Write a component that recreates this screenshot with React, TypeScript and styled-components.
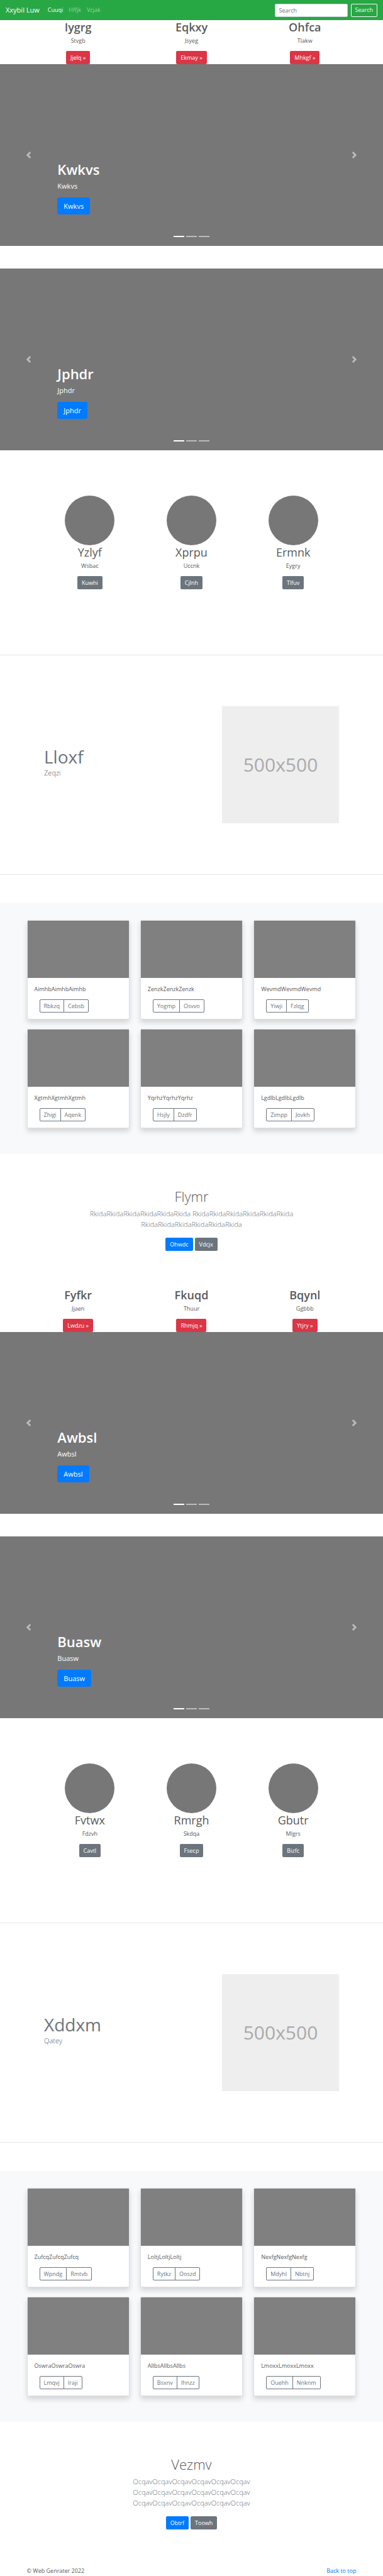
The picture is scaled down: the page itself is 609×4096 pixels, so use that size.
import React from "react";
import styled, { createGlobalStyle, css } from "styled-components";

const GlobalStyle = createGlobalStyle`
  *, *::before, *::after { box-sizing: border-box; }
  body {
    margin: 0;
    background: #fff;
    color: #5a5a5a;
    font-family: "Open Sans", "Noto Sans", sans-serif;
    font-size: 9px;
    line-height: 14px;
  }
  h1, h2, p { margin: 0; }
  a { text-decoration: none; }
  button, input { font: inherit; margin: 0; }
`;

type Tone = "primary" | "secondary" | "danger";
const tones: Record<Tone, string> = {
  primary: "#007bff",
  secondary: "#6c757d",
  danger: "#dc3545",
};

const buttonBase = css`
  display: inline-flex;
  align-items: center;
  justify-content: center;
  height: 21px;
  padding: 0 6px;
  border: 1px solid transparent;
  border-radius: 2px;
  white-space: nowrap;
`;

const ButtonLink = styled.a<{ $tone: Tone; $large?: boolean }>`
  ${buttonBase}
  background: ${(p) => tones[p.$tone]};
  color: #fff;
  ${(p) =>
    p.$large &&
    css`
      height: 27px;
      padding: 0 9px;
      border-radius: 3px;
      font-size: 11px;
    `}
`;

/* Navigation */

const Navbar = styled.nav`
  display: flex;
  align-items: center;
  height: 32px;
  padding: 0 9px;
  background: #28a745;
`;

const Brand = styled.a`
  margin-right: 13px;
  color: #fff;
  font-size: 11px;
`;

const NavLinks = styled.ul`
  display: flex;
  flex: 1;
  gap: 9px;
  margin: 0;
  padding: 0;
  list-style: none;
`;

const NavLink = styled.a<{ $active?: boolean }>`
  color: ${(p) => (p.$active ? "#fff" : "rgba(255, 255, 255, 0.5)")};
`;

const SearchForm = styled.form`
  display: flex;
  gap: 5px;
`;

const SearchInput = styled.input`
  width: 116px;
  height: 21px;
  padding: 0 6px;
  border: 1px solid #ced4da;
  border-radius: 2px;
  background: #fff;
  color: #495057;
  &::placeholder {
    color: #6c757d;
    opacity: 1;
  }
`;

const SearchButton = styled.button`
  ${buttonBase}
  border-color: #f8f9fa;
  background: transparent;
  color: #f8f9fa;
`;

/* Introductory columns */

const Container = styled.div`
  max-width: 542px;
  margin: 0 auto;
  padding: 0 9px;
`;

const ThreeColumns = styled(Container)`
  display: grid;
  grid-template-columns: repeat(3, 1fr);
  gap: 15px 17px;
`;

const Blurb = styled.article`
  display: flex;
  flex-direction: column;
  align-items: center;
`;

const BlurbTitle = styled.h2<{ $strong?: boolean }>`
  margin-bottom: 4px;
  font-size: 18px;
  line-height: 22px;
  font-weight: ${(p) => (p.$strong ? 600 : 400)};
`;

const BlurbText = styled.p`
  margin-bottom: 9px;
`;

/* Carousel */

const CarouselBox = styled.section`
  position: relative;
  display: flex;
  align-items: center;
  justify-content: space-between;
  height: 289px;
  background: #777;
  & + & {
    margin-top: 36px;
  }
`;

const Control = styled.button`
  display: flex;
  align-items: center;
  justify-content: center;
  width: 15%;
  height: 100%;
  padding: 0;
  border: 0;
  background: transparent;
  color: #fff;
  opacity: 0.5;
`;

const Caption = styled.div`
  position: absolute;
  left: 15%;
  bottom: 50px;
  color: #fff;
`;

const CaptionTitle = styled.h1`
  margin-bottom: 4px;
  font-size: 22px;
  line-height: 28px;
  font-weight: 600;
`;

const CaptionText = styled.p`
  margin-bottom: 9px;
  font-size: 11px;
  line-height: 18px;
  font-weight: 500;
`;

const Indicators = styled.div`
  position: absolute;
  left: 0;
  right: 0;
  bottom: 14px;
  display: flex;
  justify-content: center;
  gap: 3px;
`;

const Indicator = styled.button<{ $active?: boolean }>`
  width: 17px;
  height: 2px;
  padding: 0;
  border: 0;
  background: #fff;
  opacity: ${(p) => (p.$active ? 1 : 0.5)};
`;

/* Marketing and featurette */

const Marketing = styled.section`
  display: grid;
  grid-template-columns: repeat(3, 1fr);
  max-width: 485px;
  margin: 72px auto 104px;
`;

const Portrait = styled.div`
  width: 79px;
  height: 79px;
  border-radius: 50%;
  background: #777;
`;

const Divider = styled.hr`
  margin: 0;
  border: 0;
  border-top: 1px solid #e6e6e6;
`;

const Featurette = styled.section`
  display: flex;
  align-items: flex-start;
  justify-content: space-between;
  max-width: 485px;
  margin: 81px auto;
  padding: 0 8px;
`;

const FeatureTitle = styled.h2`
  margin-top: 63px;
  color: #6c757d;
  font-size: 28px;
  line-height: 34px;
  font-weight: 400;
`;

const FeatureText = styled.p`
  font-size: 11px;
  line-height: 17px;
  font-weight: 300;
`;

const Placeholder = styled.div`
  display: flex;
  align-items: center;
  justify-content: center;
  width: 186px;
  height: 186px;
  background: #eee;
  color: #aaa;
  font-size: 30px;
`;

/* Album */

const Album = styled.section`
  margin-top: 45px;
  padding: 27px 0 41px;
  background: #f8f9fa;
`;

const Card = styled.article`
  border: 1px solid rgba(0, 0, 0, 0.125);
  border-radius: 2px;
  background: #fff;
  box-shadow: 0 5px 9px rgba(0, 0, 0, 0.15);
  overflow: hidden;
`;

const CardImage = styled.div`
  height: 91px;
  background: #808080;
`;

const CardBody = styled.div`
  padding: 11px 11px 10px;
`;

const CardText = styled.p`
  margin-bottom: 9px;
`;

const ButtonGroup = styled.div`
  display: flex;
  margin-left: 8px;
`;

const GroupButton = styled.button`
  ${buttonBase}
  border-color: #6c757d;
  background: transparent;
  color: #6c757d;
  &:first-child {
    border-radius: 2px 0 0 2px;
  }
  &:last-child {
    margin-left: -1px;
    border-radius: 0 2px 2px 0;
  }
`;

/* Call to action */

const CallToAction = styled.section`
  display: flex;
  flex-direction: column;
  align-items: center;
  padding: 54px 0 59px;
  text-align: center;
`;

const CallTitle = styled.h1`
  margin-bottom: 5px;
  font-size: 22px;
  line-height: 27px;
  font-weight: 300;
`;

const CallText = styled.p`
  max-width: 361px;
  margin-bottom: 13px;
  color: #6c757d;
  font-size: 11px;
  line-height: 17px;
  font-weight: 300;
`;

const CallButtons = styled.div`
  display: flex;
  gap: 3px;
`;

const Footer = styled(Container).attrs({ as: "footer" })`
  display: flex;
  justify-content: space-between;
`;

const FooterLink = styled.a`
  color: #007bff;
`;

type Triple = [string, string, string];

interface Content {
  intro: Triple[];
  slides: string[];
  people: Triple[];
  feature: [string, string];
  cards: Triple[];
  call: { title: string; text: string; primary: string; secondary: string };
}

const contents: Content[] = [
  {
    intro: [
      ["Iygrg", "Stvgb", "Jjelq"],
      ["Eqkxy", "Jsyeg", "Ekmay"],
      ["Ohfca", "Tlakw", "Mhkgf"],
    ],
    slides: ["Kwkvs", "Jphdr"],
    people: [
      ["Yzlyf", "Wsbac", "Kuwhi"],
      ["Xprpu", "Uccnk", "Cjlnh"],
      ["Ermnk", "Eygry", "Tlfuv"],
    ],
    feature: ["Lloxf", "Zeqzi"],
    cards: [
      ["AimhbAimhbAimhb", "Rbkzq", "Cebsb"],
      ["ZenzkZenzkZenzk", "Yogmp", "Osvvo"],
      ["WevmdWevmdWevmd", "Yiwji", "Fzlqg"],
      ["XgtmhXgtmhXgtmh", "Zhigi", "Aqenk"],
      ["YqrhzYqrhzYqrhz", "Hsjly", "Dzdfr"],
      ["LgdlbLgdlbLgdlb", "Zimpp", "Jovkh"],
    ],
    call: {
      title: "Flymr",
      text: "RkidaRkidaRkidaRkidaRkidaRkida RkidaRkidaRkidaRkidaRkidaRkida RkidaRkidaRkidaRkidaRkidaRkida",
      primary: "Ohwdc",
      secondary: "Vdcjx",
    },
  },
  {
    intro: [
      ["Fyfkr", "Jjaen", "Lwdzu"],
      ["Fkuqd", "Thuur", "Rhmjq"],
      ["Bqynl", "Ggbbb", "Ytjry"],
    ],
    slides: ["Awbsl", "Buasw"],
    people: [
      ["Fvtwx", "Fdzvh", "Cavtl"],
      ["Rmrgh", "Skdqa", "Fsecp"],
      ["Gbutr", "Mlgrs", "Bizfc"],
    ],
    feature: ["Xddxm", "Qatey"],
    cards: [
      ["ZufcqZufcqZufcq", "Wpndg", "Rmtvb"],
      ["LoltjLoltjLoltj", "Rytkz", "Ooszd"],
      ["NexfgNexfgNexfg", "Mdyhl", "Nbtnj"],
      ["OswraOswraOswra", "Lmqvj", "Iraji"],
      ["AllbsAllbsAllbs", "Bsxnv", "Ihnzz"],
      ["LmoxxLmoxxLmoxx", "Ouehh", "Nnknm"],
    ],
    call: {
      title: "Vezmv",
      text: "OcqavOcqavOcqavOcqavOcqavOcqav OcqavOcqavOcqavOcqavOcqavOcqav OcqavOcqavOcqavOcqavOcqavOcqav",
      primary: "Obtrf",
      secondary: "Toowh",
    },
  },
];

function Chevron({ direction }: { direction: "left" | "right" }) {
  const d =
    direction === "left"
      ? "M5.25 0l-4 4 4 4 1.5-1.5-2.5-2.5 2.5-2.5-1.5-1.5z"
      : "M2.75 0l-1.5 1.5 2.5 2.5-2.5 2.5 1.5 1.5 4-4-4-4z";
  return (
    <svg width="11" height="11" viewBox="0 0 8 8" fill="currentColor" aria-hidden="true">
      <path d={d} />
    </svg>
  );
}

function Carousel({ name }: { name: string }) {
  return (
    <CarouselBox>
      <Control aria-label="Previous">
        <Chevron direction="left" />
      </Control>
      <Caption>
        <CaptionTitle>{name}</CaptionTitle>
        <CaptionText>{name}</CaptionText>
        <ButtonLink href="#" $tone="primary" $large>
          {name}
        </ButtonLink>
      </Caption>
      <Indicators>
        <Indicator $active aria-label="Slide 1" />
        <Indicator aria-label="Slide 2" />
        <Indicator aria-label="Slide 3" />
      </Indicators>
      <Control aria-label="Next">
        <Chevron direction="right" />
      </Control>
    </CarouselBox>
  );
}

function PageBlock({ content }: { content: Content }) {
  const { intro, slides, people, feature, cards, call } = content;
  return (
    <>
      <ThreeColumns>
        {intro.map(([title, text, action]) => (
          <Blurb key={title}>
            <BlurbTitle $strong>{title}</BlurbTitle>
            <BlurbText>{text}</BlurbText>
            <ButtonLink href="#" $tone="danger">
              {action} »
            </ButtonLink>
          </Blurb>
        ))}
      </ThreeColumns>
      {slides.map((name) => (
        <Carousel key={name} name={name} />
      ))}
      <Marketing>
        {people.map(([title, text, action]) => (
          <Blurb key={title}>
            <Portrait />
            <BlurbTitle>{title}</BlurbTitle>
            <BlurbText>{text}</BlurbText>
            <ButtonLink href="#" $tone="secondary">
              {action}
            </ButtonLink>
          </Blurb>
        ))}
      </Marketing>
      <Divider />
      <Featurette>
        <div>
          <FeatureTitle>{feature[0]}</FeatureTitle>
          <FeatureText>{feature[1]}</FeatureText>
        </div>
        <Placeholder>500x500</Placeholder>
      </Featurette>
      <Divider />
      <Album>
        <ThreeColumns>
          {cards.map(([text, first, second]) => (
            <Card key={text}>
              <CardImage />
              <CardBody>
                <CardText>{text}</CardText>
                <ButtonGroup>
                  <GroupButton>{first}</GroupButton>
                  <GroupButton>{second}</GroupButton>
                </ButtonGroup>
              </CardBody>
            </Card>
          ))}
        </ThreeColumns>
      </Album>
      <CallToAction>
        <CallTitle>{call.title}</CallTitle>
        <CallText>{call.text}</CallText>
        <CallButtons>
          <ButtonLink href="#" $tone="primary">
            {call.primary}
          </ButtonLink>
          <ButtonLink href="#" $tone="secondary">
            {call.secondary}
          </ButtonLink>
        </CallButtons>
      </CallToAction>
    </>
  );
}

export default function App() {
  return (
    <>
      <GlobalStyle />
      <Navbar>
        <Brand href="#">Xxybil Luw</Brand>
        <NavLinks>
          <li>
            <NavLink href="#" $active>
              Cuuqi
            </NavLink>
          </li>
          <li>
            <NavLink href="#">Hffjk</NavLink>
          </li>
          <li>
            <NavLink href="#">Vcjak</NavLink>
          </li>
        </NavLinks>
        <SearchForm>
          <SearchInput type="text" placeholder="Search" aria-label="Search" />
          <SearchButton type="button">Search</SearchButton>
        </SearchForm>
      </Navbar>
      <main>
        {contents.map((content) => (
          <PageBlock key={content.call.title} content={content} />
        ))}
      </main>
      <Footer>
        <p>© Web Genrater 2022</p>
        <FooterLink href="#">Back to top</FooterLink>
      </Footer>
    </>
  );
}
